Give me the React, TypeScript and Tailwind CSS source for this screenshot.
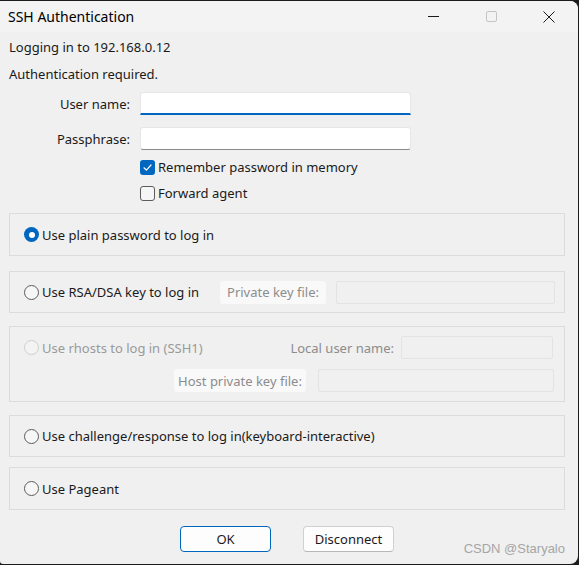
import type { ReactNode } from "react";

const font = { fontFamily: '"Noto Sans", "Open Sans", sans-serif' };

function Radio({ checked = false, disabled = false }: { checked?: boolean; disabled?: boolean }) {
  if (checked) {
    return (
      <span className="flex h-[15px] w-[15px] shrink-0 items-center justify-center rounded-full bg-[#0067c0]">
        <span className="h-[6px] w-[6px] rounded-full bg-white" />
      </span>
    );
  }
  return (
    <span
      className={
        disabled
          ? "h-[15px] w-[15px] shrink-0 rounded-full border border-[#cfcfcf] bg-[#f3f3f3]"
          : "h-[15px] w-[15px] shrink-0 rounded-full border border-[#5c5c5c] bg-[#f6f6f6]"
      }
    />
  );
}

function Checkbox({ checked = false }: { checked?: boolean }) {
  if (checked) {
    return (
      <span className="flex h-[15px] w-[15px] shrink-0 items-center justify-center rounded-[3px] bg-[#0067c0]">
        <svg width="11" height="11" viewBox="0 0 11 11" fill="none">
          <path d="M2 5.8 L4.4 8.1 L9 3" stroke="#fff" strokeWidth="1.2" strokeLinecap="round" strokeLinejoin="round" />
        </svg>
      </span>
    );
  }
  return <span className="h-[15px] w-[15px] shrink-0 rounded-[3px] border border-[#5c5c5c] bg-[#f6f6f6]" />;
}

function Group({ className, children }: { className: string; children: ReactNode }) {
  return <div className={`w-[556px] border border-[#dcdcdc] ${className}`}>{children}</div>;
}

function DisabledLabel({ children, className }: { children: ReactNode; className: string }) {
  return (
    <span className={`flex h-[23px] shrink-0 items-center justify-center rounded-[3px] bg-[#f9f9f9] text-[#8c8c8c] ${className}`}>
      {children}
    </span>
  );
}

function DisabledInput({ className }: { className: string }) {
  return <span className={`h-[23px] shrink-0 rounded-[2px] border border-[#e3e3e3] bg-[#f0f0f0] ${className}`} />;
}

export default function App() {
  return (
    <div className="relative h-[565px] w-[579px] overflow-hidden bg-[#1b1b1b] pt-px" style={font}>
      <div className="flex h-[563px] w-[578px] flex-col overflow-hidden rounded-tr-[8px] rounded-br-[8px] rounded-bl-[3px] bg-[#f0f0f0] text-[13px] leading-[16px] text-[#1a1a1a]">
        {/* title bar */}
        <div className="flex h-[31px] shrink-0 items-center bg-[#f3f3f3]">
          <span className="pl-[8px] text-[14px] text-black">SSH Authentication</span>
          <div className="ml-auto flex h-full">
            <span className="flex w-[58px] items-center justify-center">
              <span className="h-px w-[11px] bg-[#1a1a1a]" />
            </span>
            <span className="flex w-[58px] items-center justify-center">
              <span className="h-[11px] w-[11px] rounded-[2px] border border-[#c4c4c4]" />
            </span>
            <span className="flex w-[58px] items-center justify-center">
              <svg width="12" height="12" viewBox="0 0 12 12">
                <path d="M0.5 0.5 L11.5 11.5 M11.5 0.5 L0.5 11.5" stroke="#1a1a1a" strokeWidth="1" />
              </svg>
            </span>
          </div>
        </div>

        {/* body */}
        <div className="flex flex-col pl-[9px]">
          <p className="mt-[7px] h-[16px]">Logging in to 192.168.0.12</p>
          <p className="mt-[11px] h-[16px]">Authentication required.</p>

          <div className="mt-[10px] flex items-center">
            <span className="w-[121px] text-right">User name:</span>
            <span className="ml-[10px] h-[23px] w-[271px] rounded-t-[3px] border border-b-2 border-[#e6e6e6] border-b-[#0067c0] bg-white" />
          </div>
          <div className="mt-[12px] flex items-center">
            <span className="w-[121px] text-right">Passphrase:</span>
            <span className="ml-[10px] h-[23px] w-[271px] rounded-[3px] border border-[#e6e6e6] border-b-[#8a8a8a] bg-white" />
          </div>

          <div className="mt-[9px] flex h-[16px] items-center gap-[3px] pl-[131px]">
            <Checkbox checked />
            <span>Remember password in memory</span>
          </div>
          <div className="mt-[10px] flex h-[16px] items-center gap-[3px] pl-[131px]">
            <Checkbox />
            <span>Forward agent</span>
          </div>

          <Group className="mt-[12px] flex h-[43px] items-center gap-[3px] pl-[14px]">
            <Radio checked />
            <span>Use plain password to log in</span>
          </Group>

          <Group className="mt-[15px] flex h-[42px] items-center pl-[14px]">
            <div className="flex w-[196px] items-center gap-[3px]">
              <Radio />
              <span>Use RSA/DSA key to log in</span>
            </div>
            <DisabledLabel className="w-[106px]">Private key file:</DisabledLabel>
            <DisabledInput className="ml-[10px] w-[219px]" />
          </Group>

          <Group className="mt-[13px] flex h-[76px] flex-col pl-[14px] pt-[9px]">
            <div className="flex h-[23px] items-center">
              <div className="flex items-center gap-[3px] text-[#9a9a9a]">
                <Radio disabled />
                <span>Use rhosts to log in (SSH1)</span>
              </div>
              <span className="ml-auto text-[#8c8c8c]">Local user name:</span>
              <DisabledInput className="ml-[7px] mr-[11px] w-[152px]" />
            </div>
            <div className="mt-[10px] flex h-[23px] items-center justify-end">
              <DisabledLabel className="w-[132px]">Host private key file:</DisabledLabel>
              <DisabledInput className="ml-[12px] mr-[10px] w-[236px]" />
            </div>
          </Group>

          <Group className="mt-[13px] flex h-[42px] items-center gap-[3px] pl-[14px]">
            <Radio />
            <span>Use challenge/response to log in(keyboard-interactive)</span>
          </Group>

          <Group className="mt-[10px] flex h-[43px] items-center gap-[3px] pl-[14px]">
            <Radio />
            <span>Use Pageant</span>
          </Group>

          <div className="mt-[16px] flex pl-[171px]">
            <button className="h-[26px] w-[91px] rounded-[4px] border-[1.5px] border-[#0067c0] bg-[#fdfdfd] text-[13px] text-[#1a1a1a]">
              OK
            </button>
            <button className="ml-[32px] h-[26px] w-[91px] rounded-[4px] border border-[#d0d0d0] border-b-[#b8b8b8] bg-[#fdfdfd] text-[13px] text-[#1a1a1a]">
              Disconnect
            </button>
          </div>
        </div>
      </div>

      <span
        className="absolute bottom-[7px] right-[14px] text-[13px] text-[#a6a6a6]"
        style={{ fontFamily: '"Liberation Sans", Arial, sans-serif' }}
      >
        CSDN @Staryalo
      </span>
    </div>
  );
}
